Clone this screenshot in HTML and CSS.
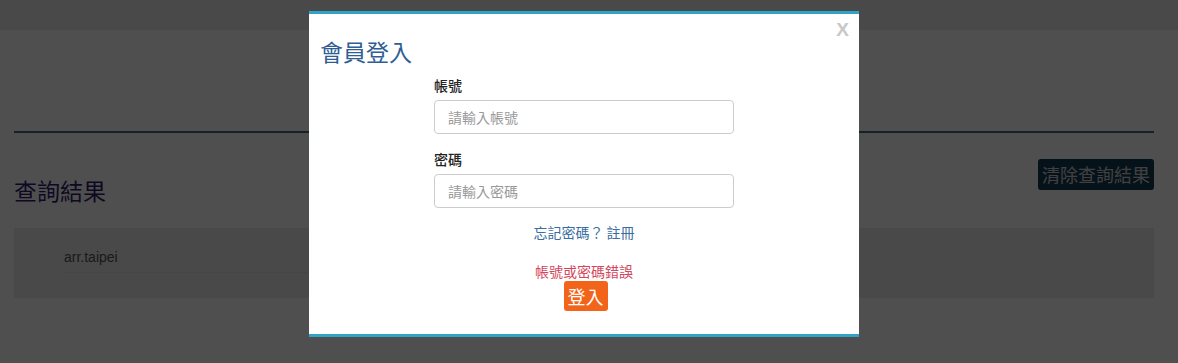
FILE: index.html
```html
<!DOCTYPE html>
<html lang="zh-Hant">
<head>
<meta charset="utf-8">
<title>會員登入</title>
<link rel="stylesheet" href="styles.css">
</head>
<body>
<div class="topbar"></div>
<div class="container">
  <div class="hero"></div>
  <div class="results-head">
    <h2 class="results-title">查詢結果</h2>
    <button class="clear-btn">清除查詢結果</button>
  </div>
  <div class="panel">
    <div class="panel-item">arr.taipei</div>
  </div>
</div>

<div class="overlay"></div>
<div class="modal">
  <span class="close">X</span>
  <h3 class="modal-title">會員登入</h3>
  <form class="login-form">
    <label class="field-label">帳號</label>
    <input class="field-input" type="text" placeholder="請輸入帳號">
    <label class="field-label second">密碼</label>
    <input class="field-input" type="password" placeholder="請輸入密碼">
    <div class="links"><a href="#">忘記密碼？</a> <a href="#">註冊</a></div>
    <div class="error">帳號或密碼錯誤</div>
    <div class="submit-row"><button type="button" class="login-btn">登入</button></div>
  </form>
</div>
</body>
</html>
```
FILE: styles.css
```css
* { box-sizing: border-box; }
body {
  margin: 0;
  background: #ffffff;
  font-family: "Noto Sans CJK TC", "Liberation Sans", sans-serif;
  font-size: 14px;
  color: #333;
}
.topbar {
  height: 30px;
  background: #ebebeb;
}
.container {
  width: 1140px;
  margin-left: 14px;
}
.hero {
  height: 103px;
  border-bottom: 2px solid #3e6e84;
}
.results-head {
  display: flex;
  justify-content: space-between;
  align-items: flex-start;
  padding-top: 26px;
}
.results-title {
  margin: 15px 0 0;
  font-size: 23px;
  font-weight: normal;
  line-height: 32px;
  color: #331a70;
}
.clear-btn {
  height: 31px;
  padding: 0 4px;
  border: none;
  border-radius: 3px;
  background: #153c55;
  color: #d0d0d0;
  font-family: "Noto Sans CJK TC", sans-serif;
  font-size: 18px;
  line-height: 31px;
}
.panel {
  margin-top: 22px;
  height: 70px;
  background: #eaeaea;
  padding: 18px 50px 0;
}
.panel-item {
  width: 700px;
  font-family: "Liberation Sans", Arial, sans-serif;
  font-size: 14px;
  color: #555;
  line-height: 22px;
  padding-bottom: 4px;
  border-bottom: 1px solid #dedede;
}
.overlay {
  position: fixed;
  inset: 0;
  background: rgba(0, 0, 0, 0.69);
}
.modal {
  position: absolute;
  left: 309px;
  top: 11px;
  width: 550px;
  height: 326px;
  background: #fff;
  border-top: 3px solid #31a3c6;
  border-bottom: 3px solid #31a3c6;
}
.close {
  position: absolute;
  right: 10px;
  top: 5px;
  font-family: "Liberation Sans", Arial, sans-serif;
  font-weight: bold;
  font-size: 19px;
  color: #c8c8c8;
}
.modal-title {
  margin: 0;
  padding: 22px 0 0 11px;
  font-size: 23px;
  font-weight: normal;
  line-height: 30px;
  color: #2f5e94;
}
.login-form {
  width: 300px;
  margin: 0 auto;
  display: flex;
  flex-direction: column;
}
.field-label {
  display: block;
  margin-top: 9px;
  line-height: 20px;
  font-size: 14px;
  font-weight: 500;
  color: #222;
}
.field-label.second { margin-top: 15px; }
.field-input {
  margin-top: 5px;
  height: 34px;
  padding: 0 13px;
  border: 1px solid #cccccc;
  border-radius: 4px;
  font-family: "Noto Sans CJK TC", sans-serif;
  font-size: 14px;
}
.field-input::placeholder { color: #999; }
.links {
  margin-top: 14px;
  text-align: center;
  line-height: 20px;
  font-size: 14px;
}
.links a { color: #3a6d9f; text-decoration: none; }
.error {
  margin-top: 19px;
  text-align: center;
  line-height: 20px;
  font-size: 14px;
  color: #d2475c;
}
.submit-row {
  display: flex;
  justify-content: center;
  margin-top: 0;
  padding-left: 3px;
}
.login-btn {
  height: 30px;
  padding: 0 4px;
  border: none;
  border-radius: 3px;
  background: #f26419;
  color: #fff;
  font-family: "Noto Sans CJK TC", sans-serif;
  font-size: 18px;
  line-height: 30px;
}
```
